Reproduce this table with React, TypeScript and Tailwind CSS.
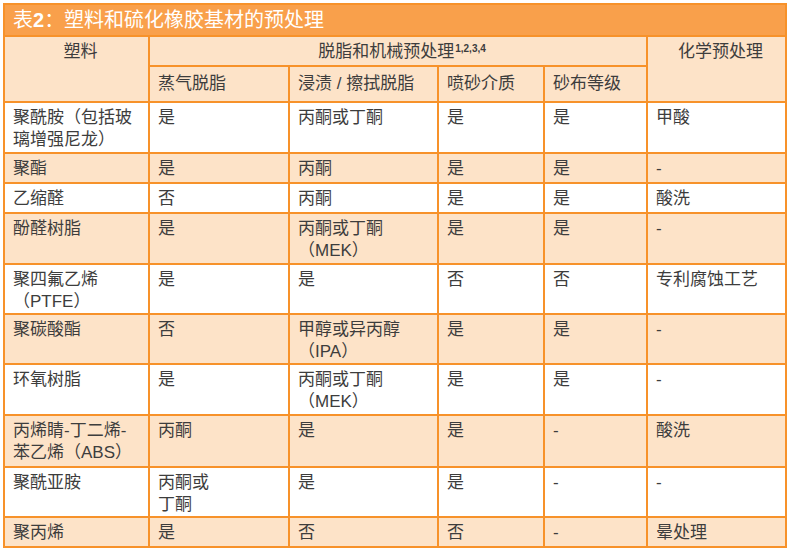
import React from "react"

type Row = { h: string; alt: boolean; cells: string[][] }

const rows: Row[] = [
  { h: "h-[51px]", alt: false, cells: [["聚酰胺（包括玻", "璃增强尼龙）"], ["是"], ["丙酮或丁酮"], ["是"], ["是"], ["甲酸"]] },
  { h: "h-[30px]", alt: true, cells: [["聚酯"], ["是"], ["丙酮"], ["是"], ["是"], ["-"]] },
  { h: "h-[30px]", alt: false, cells: [["乙缩醛"], ["否"], ["丙酮"], ["是"], ["是"], ["酸洗"]] },
  { h: "h-[51px]", alt: true, cells: [["酚醛树脂"], ["是"], ["丙酮或丁酮", "（MEK）"], ["是"], ["是"], ["-"]] },
  { h: "h-[50px]", alt: false, cells: [["聚四氟乙烯", "（PTFE）"], ["是"], ["是"], ["否"], ["否"], ["专利腐蚀工艺"]] },
  { h: "h-[50px]", alt: true, cells: [["聚碳酸酯"], ["否"], ["甲醇或异丙醇", "（IPA）"], ["是"], ["是"], ["-"]] },
  { h: "h-[51px]", alt: false, cells: [["环氧树脂"], ["是"], ["丙酮或丁酮", "（MEK）"], ["是"], ["是"], ["-"]] },
  { h: "h-[52px]", alt: true, cells: [["丙烯睛-丁二烯-", "苯乙烯（ABS）"], ["丙酮"], ["是"], ["是"], ["-"], ["酸洗"]] },
  { h: "h-[50px]", alt: false, cells: [["聚酰亚胺"], ["丙酮或", "丁酮"], ["是"], ["是"], ["-"], ["-"]] },
  { h: "h-[30px]", alt: true, cells: [["聚丙烯"], ["是"], ["否"], ["否"], ["-"], ["晕处理"]] },
]

const cell = "border-2 border-[#f7922a] align-top pl-[8px] pt-[4px] leading-[22px]"

export default function App() {
  return (
    <div
      className="w-[792px] h-[551px] bg-white pl-[3px] pt-[3px] text-[#3d3d3d] text-[17px]"
      style={{ fontFamily: '"Liberation Sans", "Noto Sans CJK SC", sans-serif' }}
    >
      <table className="table-fixed border-collapse w-[782px]">
        <colgroup>
          <col className="w-[145px]" />
          <col className="w-[140px]" />
          <col className="w-[149px]" />
          <col className="w-[106px]" />
          <col className="w-[103px]" />
          <col className="w-[139px]" />
        </colgroup>
        <thead>
          <tr className="h-[32px]">
            <th
              colSpan={6}
              className="border-2 border-[#f7922a] bg-[#f9a04b] text-white text-left font-normal text-[20px] pl-[8px] leading-[26px]"
            >
              表<span className="font-bold">2</span>：塑料和硫化橡胶基材的预处理
            </th>
          </tr>
          <tr className="h-[30px] bg-[#fde3c8]">
            <th rowSpan={2} className={`${cell} font-normal text-center pl-0`}>
              塑料
            </th>
            <th colSpan={4} className={`${cell} font-normal text-center pl-0`}>
              脱脂和机械预处理
              <sup className="text-[10px] font-bold ml-[1px]">1,2,3,4</sup>
            </th>
            <th rowSpan={2} className={`${cell} font-normal text-center pl-0`}>
              化学预处理
            </th>
          </tr>
          <tr className="h-[36px] bg-[#fde3c8]">
            <th className={`${cell} font-normal text-left pt-[6px]`}>蒸气脱脂</th>
            <th className={`${cell} font-normal text-left pt-[6px]`}>浸渍 / 擦拭脱脂</th>
            <th className={`${cell} font-normal text-left pt-[6px]`}>喷砂介质</th>
            <th className={`${cell} font-normal text-left pt-[6px]`}>砂布等级</th>
          </tr>
        </thead>
        <tbody>
          {rows.map((r, i) => (
            <tr key={i} className={`${r.h} ${r.alt ? "bg-[#fde3c8]" : "bg-white"}`}>
              {r.cells.map((lines, j) => (
                <td key={j} className={cell}>
                  {lines.map((l, k) => (
                    <div key={k} className="whitespace-nowrap">
                      {l}
                    </div>
                  ))}
                </td>
              ))}
            </tr>
          ))}
        </tbody>
      </table>
    </div>
  )
}
